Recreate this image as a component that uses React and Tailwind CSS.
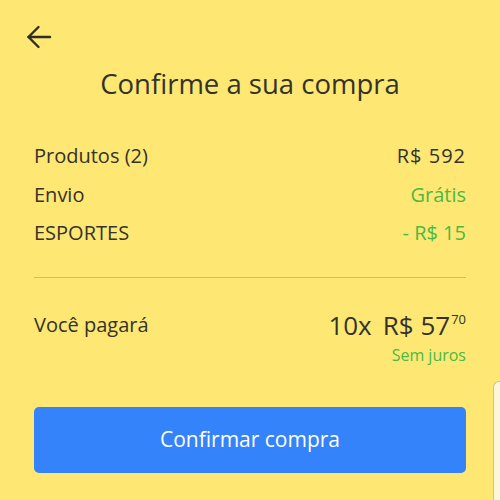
const Row = ({ label, value, green }) => (
  <div className="flex justify-between items-center h-[38.5px]">
    <span>{label}</span>
    <span className={green ? 'text-[#4cb944]' : 'tracking-[1px]'}>{value}</span>
  </div>
);

export default function App() {
  return (
    <div className="relative w-[500px] h-[500px] overflow-hidden bg-[#fee873] text-[#34322a] font-['Open_Sans',sans-serif]">
      {/* cabeçalho */}
      <div className="h-[56px]">
        <svg width="60" height="56" viewBox="0 0 60 56" fill="none" stroke="#2f2d24" strokeWidth="2.4" strokeLinecap="round" strokeLinejoin="round">
          <path d="M28.5 37H50" />
          <path d="M38.5 27L28.5 37L38.5 47" />
        </svg>
      </div>
      <h1 className="text-center text-[27.5px] leading-[60px] -mt-[2px]">Confirme a sua compra</h1>

      <div className="px-[34px]">
        <div className="mt-[23px] text-[20px]">
          <Row label="Produtos (2)" value="R$ 592" />
          <Row label="Envio" value="Grátis" green />
          <Row label="ESPORTES" value="- R$ 15" green />
        </div>

        <div className="mt-[24px] h-px bg-[#cfc063]" />

        <div className="mt-[32px] flex justify-between items-start">
          <span className="text-[20px] leading-[30px]">Você pagará</span>
          <div className="flex flex-col items-end">
            <div className="text-[26px] leading-[30px] flex items-start">
              <span className="mr-[11px]">10x</span>
              <span>R$ 57</span>
              <span className="text-[13px] leading-[16px] ml-[1px] mt-[1px]">70</span>
            </div>
            <span className="text-[16px] text-[#4cb944] mt-[3px]">Sem juros</span>
          </div>
        </div>

        <button className="mt-[40px] w-full h-[66px] rounded-[5px] bg-[#3483fa] text-white text-[21px]">
          Confirmar compra
        </button>
      </div>

      {/* painel lateral */}
      <div className="absolute left-[493px] top-[381px] w-[30px] h-[140px] rounded-tl-[6px] border-l border-t border-[#c9c2a0] bg-[#fdf6d9]" />
    </div>
  );
}
